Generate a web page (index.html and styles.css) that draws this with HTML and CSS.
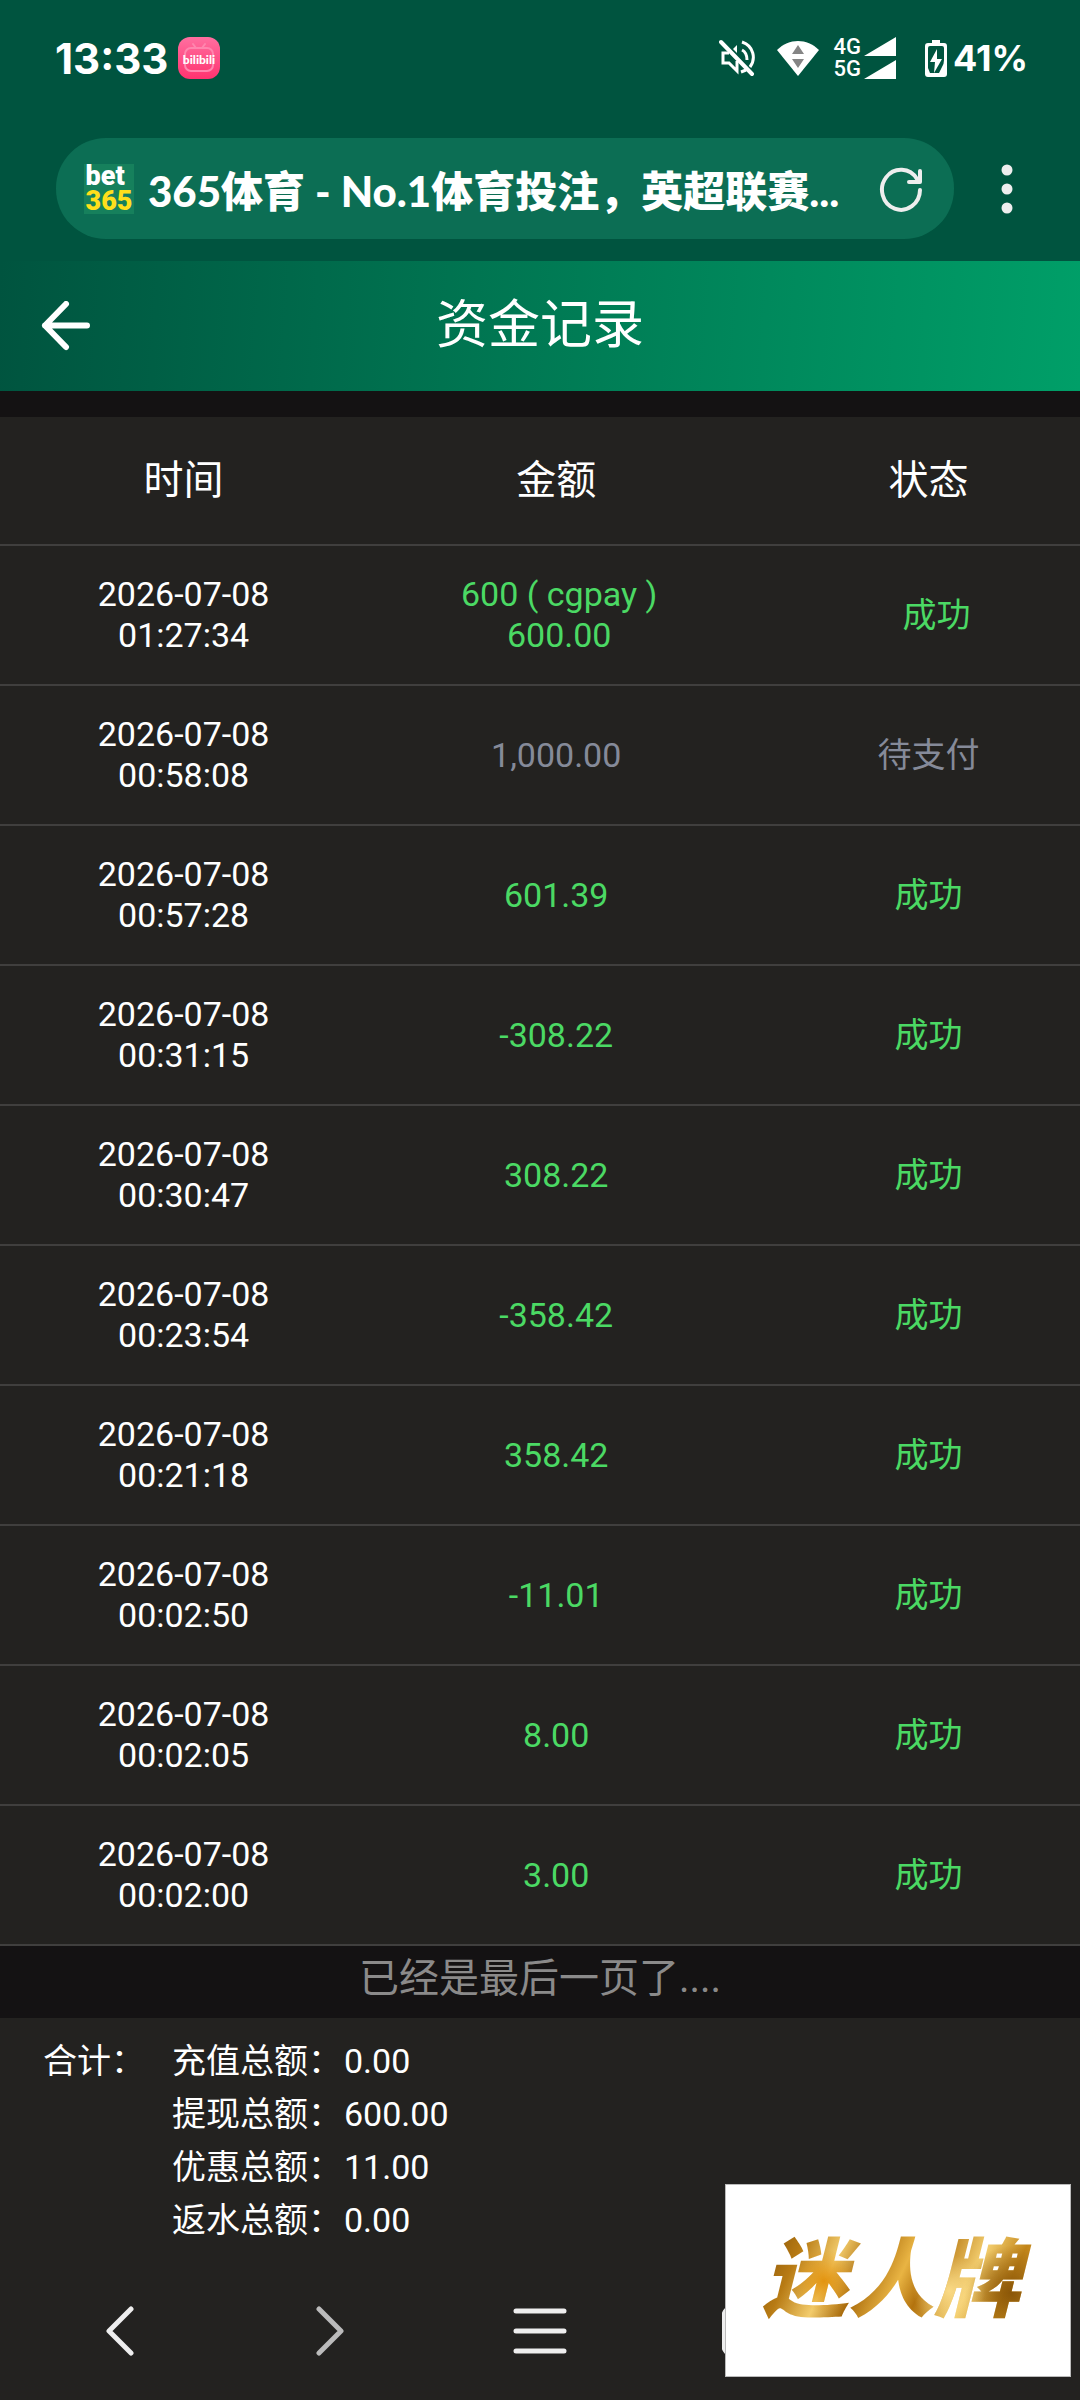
FILE: index.html
```html
<!DOCTYPE html>
<html lang="zh-CN">
<head>
<meta charset="utf-8">
<meta name="viewport" content="width=device-width, initial-scale=1">
<title>资金记录</title>
<link rel="stylesheet" href="styles.css">
</head>
<body>
<div class="status-bar">
  <span class="clock">13:33</span>
  <svg class="app-badge" viewBox="0 0 42 42" aria-hidden="true">
    <defs><linearGradient id="pink" x1="0" y1="0" x2="0" y2="1"><stop offset="0" stop-color="#ff6fa0"/><stop offset="1" stop-color="#ff3370"/></linearGradient></defs>
    <rect width="42" height="42" rx="12" fill="url(#pink)"/>
    <g fill="none" stroke="#ff86ae" stroke-width="2" stroke-linecap="round"><rect x="7" y="11" width="28" height="23" rx="6"/><path d="M15 7l3 4M27 7l-3 4"/></g>
    <text x="21" y="27" class="badge-text">bilibili</text>
  </svg>
  <div class="status-icons">
    <svg class="mute" width="36" height="38" viewBox="0 0 36 38" fill="none" stroke="#fff" stroke-width="3" aria-hidden="true">
      <path d="M2 3l31 32" stroke-linecap="round" stroke-width="4"/>
      <path d="M10 14H4v10h6l8 8V22"/>
      <path d="M14 10l4-4v8z" fill="#fff" stroke="none"/>
      <path d="M23 3c12 4 14 17 8 25M23 11c4 2 5 5 5 10M22 33l5-2"/>
    </svg>
    <svg class="wifi" width="42" height="38" viewBox="0 0 42 38" aria-hidden="true">
      <path d="M0 11C12-1 30-1 42 11L21 37z" fill="#fff"/>
      <path d="M21 6l6 9H15zM21 29l6-9H15z" fill="#858585"/>
    </svg>
    <div class="networks"><span>4G</span><span>5G</span></div>
    <svg class="signal" width="32" height="42" viewBox="0 0 32 42" fill="#fff" aria-hidden="true"><path d="M0 19L32 0v19zM0 42L32 23v19z"/></svg>
    <svg class="battery" width="22" height="37" viewBox="0 0 22 37" aria-hidden="true">
      <path d="M7 0h8v3h4q3 0 3 3v28q0 3-3 3H3q-3 0-3-3V6q0-3 3-3h4z" fill="#fff"/>
      <path d="M5 6h12q2 0 2 2v12q0 4-2 7l-3 6H5l-2-5V8q0-2 2-2z" fill="#00543f"/>
      <path d="M12 9L5 22h5l-1 11 8-14h-5z" fill="#fff"/>
    </svg>
    <span class="percent">41%</span>
  </div>
</div>

<div class="browser-bar">
  <div class="address">
    <div class="site-logo" aria-hidden="true"><span class="logo-top">bet</span><span class="logo-bottom">365</span></div>
    <input class="address-input" type="text" aria-label="地址栏" value="365体育 - No.1体育投注，英超联赛..." readonly>
    <button class="icon-button" type="button" aria-label="刷新">
      <svg width="44" height="46" viewBox="0 0 44 46" fill="none" stroke="#eee" stroke-width="4" stroke-linecap="round" stroke-linejoin="round"><path d="M41 24A19 20 0 1 1 38 13M41 5v11H30"/></svg>
    </button>
  </div>
  <button class="icon-button more" type="button" aria-label="更多">
    <svg width="12" height="52" viewBox="0 0 12 52" fill="#eee"><circle cx="6" cy="7" r="5.5"/><circle cx="6" cy="26" r="5.5"/><circle cx="6" cy="45" r="5.5"/></svg>
  </button>
</div>

<header class="page-header">
  <button class="icon-button" type="button" aria-label="返回">
    <svg width="50" height="50" viewBox="0 0 50 50" fill="none" stroke="#fff" stroke-width="6" stroke-linecap="round" stroke-linejoin="round"><path d="M25 3L4 24.500 25 46M4 24.500H46"/></svg>
  </button>
  <h1>资金记录</h1>
</header>

<main>
  <table class="records">
    <colgroup><col class="col-time"><col class="col-amount"><col class="col-status"></colgroup>
    <thead><tr><th scope="col">时间</th><th scope="col">金额</th><th scope="col">状态</th></tr></thead>
    <tbody>
      <tr class="success withdrawal"><td>2026-07-08<br>01:27:34</td><td>600 ( cgpay )<br>600.00</td><td>成功</td></tr>
      <tr class="pending"><td>2026-07-08<br>00:58:08</td><td>1,000.00</td><td>待支付</td></tr>
      <tr class="success"><td>2026-07-08<br>00:57:28</td><td>601.39</td><td>成功</td></tr>
      <tr class="success"><td>2026-07-08<br>00:31:15</td><td>-308.22</td><td>成功</td></tr>
      <tr class="success"><td>2026-07-08<br>00:30:47</td><td>308.22</td><td>成功</td></tr>
      <tr class="success"><td>2026-07-08<br>00:23:54</td><td>-358.42</td><td>成功</td></tr>
      <tr class="success"><td>2026-07-08<br>00:21:18</td><td>358.42</td><td>成功</td></tr>
      <tr class="success"><td>2026-07-08<br>00:02:50</td><td>-11.01</td><td>成功</td></tr>
      <tr class="success"><td>2026-07-08<br>00:02:05</td><td>8.00</td><td>成功</td></tr>
      <tr class="success"><td>2026-07-08<br>00:02:00</td><td>3.00</td><td>成功</td></tr>
    </tbody>
  </table>
  <p class="list-end">已经是最后一页了....</p>
  <section class="totals">
    <h2>合计：</h2>
    <dl>
      <div><dt>充值总额：</dt><dd>0.00</dd></div>
      <div><dt>提现总额：</dt><dd>600.00</dd></div>
      <div><dt>优惠总额：</dt><dd>11.00</dd></div>
      <div><dt>返水总额：</dt><dd>0.00</dd></div>
    </dl>
  </section>
</main>

<nav class="bottom-nav">
  <button class="icon-button" type="button" aria-label="后退"><svg width="28" height="50" viewBox="0 0 28 50"><path d="M25 3L3 25l22 22"/></svg></button>
  <button class="icon-button dim" type="button" aria-label="前进"><svg width="28" height="50" viewBox="0 0 28 50"><path d="M3 3l22 22L3 47"/></svg></button>
  <button class="icon-button" type="button" aria-label="菜单"><svg width="54" height="50" viewBox="0 0 54 50"><path d="M3 5h48M3 25h48M3 45h48"/></svg></button>
  <button class="icon-button" type="button" aria-label="标签页"><svg width="56" height="50" viewBox="0 0 56 50"><rect x="2" y="2" width="52" height="46" rx="8"/></svg></button>
</nav>

<div class="watermark"><span>迷人牌</span></div>
</body>
</html>
```
FILE: styles.css
```css
* { box-sizing: border-box; }

body {
  position: relative;
  min-height: 100vh;
  margin: 0;
  background: #232220;
  color: #fff;
  font-family: Roboto, "Noto Sans CJK SC", sans-serif;
  font-size: 34px;
  line-height: 41px;
}

h1, h2, p, dl, dd { margin: 0; font-weight: 400; }
svg { display: block; }

.icon-button {
  display: grid;
  place-items: center;
  padding: 0;
  border: 0;
  background: none;
}

/* system status bar */
.status-bar {
  display: flex;
  align-items: center;
  height: 116px;
  padding: 0 52px 0 55px;
  background: #00543f;
}
.clock {
  font-family: Inter, sans-serif;
  font-size: 42px;
  font-weight: 700;
}
.app-badge { width: 42px; height: 42px; margin-left: 10px; }
.badge-text {
  fill: #fff;
  font-family: Lato, sans-serif;
  font-size: 12px;
  font-weight: 900;
  text-anchor: middle;
}
.status-icons { display: flex; align-items: center; margin-left: auto; }
.wifi { margin-left: 22px; }
.networks {
  display: grid;
  margin-left: 14px;
  font-size: 22px;
  font-weight: 500;
  line-height: 22px;
}
.signal { margin-left: 3px; }
.battery { margin: 0 6px 0 29px; }
.percent {
  font-family: Inter, sans-serif;
  font-size: 36px;
  font-weight: 700;
}

/* browser address bar */
.browser-bar {
  display: flex;
  align-items: center;
  height: 145px;
  padding: 0 67px 0 56px;
  background: #00543f;
}
.address {
  display: flex;
  flex: 1;
  align-items: center;
  min-width: 0;
  height: 101px;
  padding: 0 31px 0 28px;
  border-radius: 50px;
  background: #0c6e54;
}
.site-logo {
  display: grid;
  flex: none;
  justify-content: center;
  width: 50px;
  height: 50px;
  background: #16805c;
  font-size: 27px;
  font-weight: 900;
  line-height: 25px;
}
.logo-bottom { color: #ffdf1b; }
.address-input {
  flex: 1;
  min-width: 0;
  height: 60px;
  margin: 0 16px 0 14px;
  padding: 0;
  border: 0;
  outline: 0;
  background: none;
  color: #fff;
  font-family: Lato, "Noto Sans CJK SC", sans-serif;
  font-size: 42px;
  font-weight: 900;
}
.more { margin-left: 47px; }

/* page header */
.page-header {
  display: grid;
  grid-template-columns: 50px 1fr 50px;
  align-items: center;
  height: 130px;
  padding: 0 41px;
  background: linear-gradient(94deg, #00543f, #009f68);
}
.page-header h1 {
  font-size: 52px;
  line-height: 60px;
  text-align: center;
}

/* records */
.records {
  width: 100%;
  border-top: 26px solid #141213;
  border-collapse: separate;
  border-spacing: 0;
  table-layout: fixed;
  text-align: center;
}
.col-time { width: 34%; }
.col-amount { width: 35%; }
.col-status { width: 31%; }
.records th, .records td {
  height: 140px;
  padding: 0;
  border-bottom: 2px solid #403f3e;
}
.records th {
  height: 129px;
  font-size: 40px;
  font-weight: 400;
}
.records th:last-child, .records td:last-child { padding-left: 32px; }
.records .withdrawal td:nth-child(2) { padding-left: 6px; }
.records .withdrawal td:last-child { padding-left: 48px; }
.success td { color: #4bd964; }
.pending td { color: #858a99; }
.records tbody td:first-child { color: #fff; }

.list-end {
  height: 72px;
  padding-top: 12px;
  background: #141213;
  color: #8b8a8a;
  font-size: 40px;
  text-align: center;
}

/* totals */
.totals {
  display: flex;
  height: 246px;
  padding: 17px 43px;
  line-height: 53px;
}
.totals h2 { width: 129px; font-size: 34px; }
.totals div { display: grid; grid-template-columns: 172px 1fr; }

/* browser navigation */
.bottom-nav {
  display: grid;
  grid-template-columns: repeat(5, 1fr);
  height: 134px;
  padding: 0 15px;
}
.bottom-nav svg {
  fill: none;
  stroke: #eee;
  stroke-width: 5;
  stroke-linecap: round;
  stroke-linejoin: round;
}
.bottom-nav .dim svg { stroke: #bbb; }

/* floating banner over the page corner */
.watermark {
  position: absolute;
  right: 9px;
  bottom: 23px;
  display: grid;
  place-items: center;
  width: 346px;
  height: 193px;
  border: 1px solid #bbb;
  background: #fff;
}
.watermark span {
  padding: 0 20px 0 6px;
  background:
    radial-gradient(circle at 24% 50%, #e2930f 0, transparent 14%),
    radial-gradient(circle at 68% 60%, #f9d985 0, transparent 18%),
    radial-gradient(circle at 90% 62%, #8a5608 0, transparent 18%),
    linear-gradient(115deg, #7c4a05, #b87b14 16%, #f3cc6c 28%, #a86a0b 38%, #e9b443 50%, #b3730e 58%, #f4cf70 72%, #c28519 84%, #d9a53c);
  background-clip: text;
  color: transparent;
  font-size: 86px;
  font-style: italic;
  font-weight: 900;
  line-height: 100px;
}
```
